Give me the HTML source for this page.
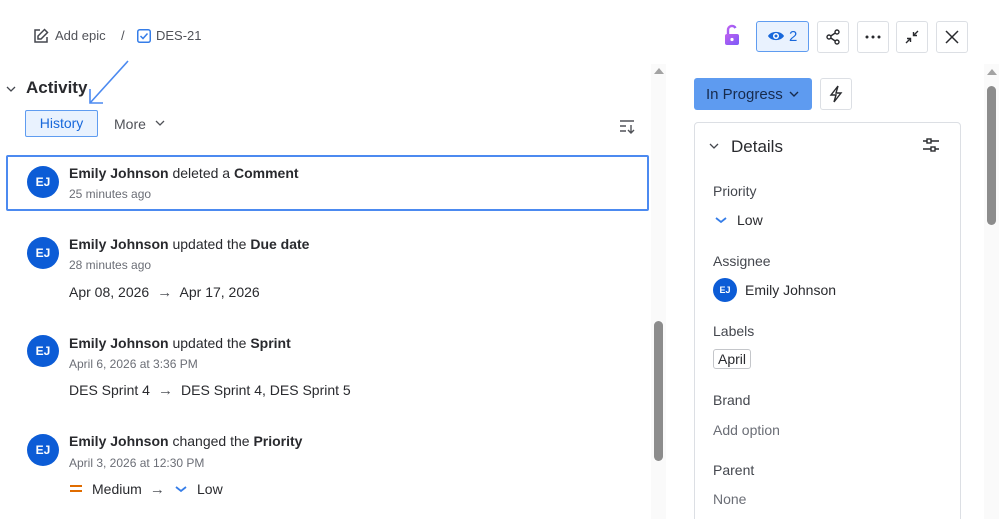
<!DOCTYPE html>
<html><head><meta charset="utf-8"><style>
*{box-sizing:border-box;margin:0;padding:0}
html,body{width:999px;height:519px;overflow:hidden}
body{background:#fff;font-family:"Liberation Sans",sans-serif;color:#172b4d;position:relative}
.a{position:absolute}
.t{font-size:14px;color:#292a2e;white-space:nowrap}
.b{font-weight:bold}
.g{color:#6b6e76;font-size:12px}
.av{width:32px;height:32px;border-radius:50%;background:#0c5cd6;color:#fff;font-size:12px;font-weight:bold;display:flex;align-items:center;justify-content:center}
.btn{width:32px;height:32px;border:1px solid #dcdfe4;border-radius:3px;display:flex;align-items:center;justify-content:center;background:#fff}
.lab{font-size:14px;color:#44474e}
.ar{font-size:15px;color:#505258}
</style></head><body>
<svg class="a" style="left:33px;top:28px" width="16" height="16" viewBox="0 0 16 16" fill="none" stroke="#44474e" stroke-width="1.5"><path d="M7 2H2v12h12V9"/><path d="M11.5 1.5l3 3L8 11H5V8z"/></svg>
<div class="a t" style="left:55px;top:28px;font-size:13px;color:#505258">Add epic</div>
<div class="a t" style="left:121px;top:28px;font-size:13px;color:#505258">/</div>
<svg class="a" style="left:137px;top:29px" width="14" height="14" viewBox="0 0 14 14" fill="none"><rect x="0.75" y="0.75" width="12.5" height="12.5" rx="2" stroke="#357de8" stroke-width="1.5"/><path d="M3.5 7l2.5 2.5 4.5-5" stroke="#357de8" stroke-width="1.5"/></svg>
<div class="a t" style="left:156px;top:28px;font-size:13px;color:#505258">DES-21</div>
<svg class="a" style="left:5px;top:84px" width="12" height="10" viewBox="0 0 12 10"><path d="M2 3l4 4 4-4" fill="none" stroke="#44474e" stroke-width="1.3"/></svg>
<div class="a t b" style="left:26px;top:78px;font-size:17px">Activity</div>
<svg class="a" style="left:84px;top:58px" width="50" height="50" viewBox="0 0 50 50" fill="none" stroke="#4c8af0" stroke-width="1.6"><path d="M44 3L6 45"/><path d="M6 31v14h13"/></svg>
<div class="a" style="left:25px;top:110px;width:73px;height:27px;border:1px solid #5f9cf0;background:#e9f2fe;border-radius:2px;color:#1868db;font-size:14px;text-align:center;line-height:25px">History</div>
<div class="a t" style="left:114px;top:116px;color:#505258">More</div>
<svg class="a" style="left:154px;top:118px" width="12" height="10"><path d="M2 3l4 4 4-4" fill="none" stroke="#505258" stroke-width="1.3"/></svg>
<svg class="a" style="left:619px;top:119px" width="18" height="16" viewBox="0 0 18 16" fill="none" stroke="#505258" stroke-width="1.4"><path d="M1 2h14M1 7h6M1 12h6M12 6v8M9 11l3 3 3-3"/></svg>
<div class="a" style="left:6px;top:155px;width:643px;height:56px;border:2px solid #4c8af0;border-radius:2px"></div>
<div class="a av" style="left:27px;top:166px">EJ</div>
<div class="a t" style="left:69px;top:165px"><span class="b">Emily Johnson</span> deleted a <span class="b">Comment</span></div>
<div class="a g" style="left:69px;top:187px">25 minutes ago</div>
<div class="a av" style="left:27px;top:237px">EJ</div>
<div class="a t" style="left:69px;top:236px"><span class="b">Emily Johnson</span> updated the <span class="b">Due date</span></div>
<div class="a g" style="left:69px;top:258px">28 minutes ago</div>
<div class="a t" style="left:69px;top:284px">Apr 08, 2026 <span class="ar">&nbsp;→&nbsp;</span> Apr 17, 2026</div>
<div class="a av" style="left:27px;top:335px">EJ</div>
<div class="a t" style="left:69px;top:335px"><span class="b">Emily Johnson</span> updated the <span class="b">Sprint</span></div>
<div class="a g" style="left:69px;top:357px">April 6, 2026 at 3:36 PM</div>
<div class="a t" style="left:69px;top:382px">DES Sprint 4 <span class="ar">&nbsp;→&nbsp;</span> DES Sprint 4, DES Sprint 5</div>
<div class="a av" style="left:27px;top:434px">EJ</div>
<div class="a t" style="left:69px;top:433px"><span class="b">Emily Johnson</span> changed the <span class="b">Priority</span></div>
<div class="a g" style="left:69px;top:456px">April 3, 2026 at 12:30 PM</div>
<svg class="a" style="left:69px;top:484px" width="14" height="10"><path d="M1 2h12M1 7h12" stroke="#e06c00" stroke-width="2"/></svg>
<div class="a t" style="left:92px;top:481px">Medium <span class="ar">&nbsp;→</span></div>
<svg class="a" style="left:174px;top:485px" width="14" height="8"><path d="M2 2l5 4 5-4" fill="none" stroke="#357de8" stroke-width="1.8"/></svg>
<div class="a t" style="left:197px;top:481px">Low</div>
<div class="a" style="left:651px;top:64px;width:15px;height:455px;background:#fafafa"></div>
<svg class="a" style="left:653px;top:67px" width="12" height="8"><path d="M1 7l5-6 5 6z" fill="#a3a3a3"/></svg>
<div class="a" style="left:654px;top:321px;width:9px;height:140px;background:#8c8c8c;border-radius:5px"></div>
<svg class="a" style="left:723px;top:24px" width="18" height="22" viewBox="0 0 18 22"><defs><linearGradient id="lg" x1="0" y1="0" x2="1" y2="1"><stop offset="0" stop-color="#c060f0"/><stop offset="1" stop-color="#7a5af8"/></linearGradient></defs><path d="M5 10V6a4 4 0 0 1 7.5-2" fill="none" stroke="url(#lg)" stroke-width="2.4"/><rect x="2" y="10" width="14" height="11" rx="2" fill="url(#lg)"/><circle cx="9" cy="15.5" r="1.6" fill="#fff"/></svg>
<div class="a" style="left:756px;top:21px;width:53px;height:31px;border:1px solid #5f9cf0;background:#e9f2fe;border-radius:3px"></div>
<svg class="a" style="left:767px;top:29px" width="18" height="14" viewBox="0 0 18 14"><path d="M1 7C4 1.5 14 1.5 17 7 14 12.5 4 12.5 1 7z" fill="#1868db"/><circle cx="9" cy="7" r="3" fill="#fff"/><circle cx="9" cy="7" r="1.5" fill="#1868db"/></svg>
<div class="a t" style="left:789px;top:28px;font-size:15px;color:#1868db">2</div>
<div class="a btn" style="left:817px;top:21px"><svg width="16" height="16" viewBox="0 0 16 16" fill="none" stroke="#292a2e" stroke-width="1.4"><circle cx="12" cy="3" r="2"/><circle cx="4" cy="8" r="2"/><circle cx="12" cy="13" r="2"/><path d="M5.8 7l4.4-3M5.8 9l4.4 3"/></svg></div>
<div class="a btn" style="left:857px;top:21px"><svg width="16" height="4"><circle cx="2" cy="2" r="1.5" fill="#292a2e"/><circle cx="8" cy="2" r="1.5" fill="#292a2e"/><circle cx="14" cy="2" r="1.5" fill="#292a2e"/></svg></div>
<div class="a btn" style="left:896px;top:21px"><svg width="16" height="16" viewBox="0 0 16 16" fill="none" stroke="#292a2e" stroke-width="1.4"><path d="M14 2L9.5 6.5M9.5 3v3.5H13M2 14l4.5-4.5M3 9.5h3.5V13"/></svg></div>
<div class="a btn" style="left:936px;top:21px"><svg width="14" height="14" viewBox="0 0 14 14"><path d="M1 1l12 12M13 1L1 13" stroke="#292a2e" stroke-width="1.5"/></svg></div>
<div class="a" style="left:694px;top:78px;width:118px;height:32px;background:#5e9bf0;border-radius:3px"></div>
<div class="a t" style="left:706px;top:86px;font-size:15px;color:#172b4d">In Progress</div>
<svg class="a" style="left:788px;top:89px" width="12" height="10"><path d="M2 3l4 4 4-4" fill="none" stroke="#172b4d" stroke-width="1.4"/></svg>
<div class="a btn" style="left:820px;top:78px;width:32px;height:32px"><svg width="14" height="18" viewBox="0 0 14 18" fill="none" stroke="#292a2e" stroke-width="1.4"><path d="M9 1L2 10h5l-2 7 7-9H7z"/></svg></div>
<div class="a" style="left:694px;top:122px;width:267px;height:410px;border:1px solid #dcdfe4;border-radius:4px"></div>
<svg class="a" style="left:708px;top:141px" width="12" height="10"><path d="M2 3l4 4 4-4" fill="none" stroke="#44474e" stroke-width="1.3"/></svg>
<div class="a t" style="left:731px;top:137px;font-size:17px">Details</div>
<svg class="a" style="left:922px;top:137px" width="18" height="16" viewBox="0 0 18 16" fill="none" stroke="#292a2e" stroke-width="1.4"><path d="M1 4h4M9 4h8M1 12h8M13 12h4"/><rect x="5" y="2" width="4" height="4"/><rect x="9" y="10" width="4" height="4"/></svg>
<div class="a lab" style="left:713px;top:183px">Priority</div>
<svg class="a" style="left:714px;top:216px" width="14" height="8"><path d="M2 2l5 4 5-4" fill="none" stroke="#357de8" stroke-width="1.8"/></svg>
<div class="a t" style="left:737px;top:212px">Low</div>
<div class="a lab" style="left:713px;top:253px">Assignee</div>
<div class="a av" style="left:713px;top:278px;width:24px;height:24px;font-size:9px">EJ</div>
<div class="a t" style="left:745px;top:282px">Emily Johnson</div>
<div class="a lab" style="left:713px;top:323px">Labels</div>
<div class="a t" style="left:713px;top:349px;border:1px solid #c4c6ca;border-radius:3px;padding:1px 4px;line-height:16px">April</div>
<div class="a lab" style="left:713px;top:392px">Brand</div>
<div class="a lab" style="left:713px;top:422px;color:#6b6e76">Add option</div>
<div class="a lab" style="left:713px;top:462px">Parent</div>
<div class="a lab" style="left:713px;top:491px;color:#6b6e76">None</div>
<div class="a" style="left:984px;top:64px;width:15px;height:455px;background:#fafafa"></div>
<svg class="a" style="left:986px;top:68px" width="12" height="8"><path d="M1 7l5-6 5 6z" fill="#a3a3a3"/></svg>
<div class="a" style="left:987px;top:86px;width:9px;height:139px;background:#8c8c8c;border-radius:5px"></div>
</body></html>
